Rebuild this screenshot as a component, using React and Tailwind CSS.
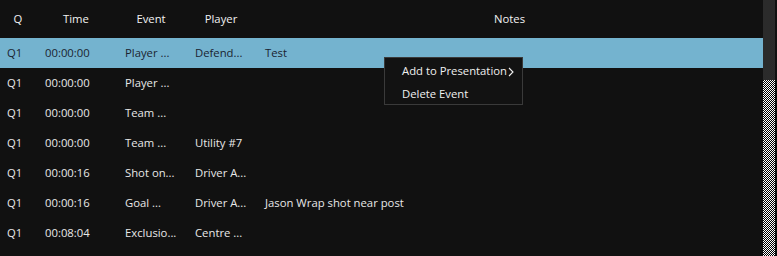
import React from "react";

const rows = [
  ["Q1", "00:00:00", "Player ...", "Defend...", "Test"],
  ["Q1", "00:00:00", "Player ...", "", ""],
  ["Q1", "00:00:00", "Team ...", "", ""],
  ["Q1", "00:00:00", "Team ...", "Utility #7", ""],
  ["Q1", "00:00:16", "Shot on...", "Driver A...", ""],
  ["Q1", "00:00:16", "Goal ...", "Driver A...", "Jason Wrap shot near post"],
  ["Q1", "00:08:04", "Exclusio...", "Centre ...", ""],
];

export default function App() {
  return (
    <div
      className="relative w-[777px] h-[256px] overflow-hidden bg-[#111111] text-[11.3px] text-[#e8e8e8] flex"
      style={{ fontFamily: '"Open Sans", "Noto Sans", sans-serif' }}
    >
      <div className="w-[763px] flex flex-col">
        <div className="h-[38px] flex items-center text-[#f2f2f2] shrink-0">
          <div className="w-[36px] text-center">Q</div>
          <div className="w-[80px] text-center">Time</div>
          <div className="w-[70px] text-center">Event</div>
          <div className="w-[70px] text-center">Player</div>
          <div className="flex-1 text-center">Notes</div>
        </div>
        {rows.map((r, i) => (
          <div
            key={i}
            className={
              "h-[30px] flex items-center shrink-0 whitespace-nowrap " +
              (i === 0 ? "bg-[#74b3cf] text-[#1a2330]" : "")
            }
          >
            <div className="w-[36px] pl-[7px]">{r[0]}</div>
            <div className="w-[80px] pl-[9px]">{r[1]}</div>
            <div className="w-[70px] pl-[9px]">{r[2]}</div>
            <div className="w-[70px] pl-[9px]">{r[3]}</div>
            <div className="flex-1 pl-[9px]">{r[4]}</div>
          </div>
        ))}
      </div>
      <div className="w-[12px] flex flex-col">
        <div className="h-[80px] bg-[#2b2b2b]" />
        <div className="flex-1 bg-[repeating-conic-gradient(#ffffff_0_25%,#000000_0_50%)] bg-[length:2px_2px]" />
      </div>

      <div className="absolute left-[384px] top-[57px] w-[139px] h-[48px] bg-[#121212] border border-[#3a3a3a] flex flex-col text-[#f0f0f0]">
        <div className="h-[27px] flex items-center pl-[17px] relative">
          <span>Add to Presentation</span>
          <svg className="absolute left-[123px] top-[9px]" width="6" height="10" viewBox="0 0 6 10">
            <path d="M1 1 L5 5 L1 9" fill="none" stroke="#f0f0f0" strokeWidth="1.1" />
          </svg>
        </div>
        <div className="h-[19px] flex items-center pl-[17px]">Delete Event</div>
      </div>
    </div>
  );
}
